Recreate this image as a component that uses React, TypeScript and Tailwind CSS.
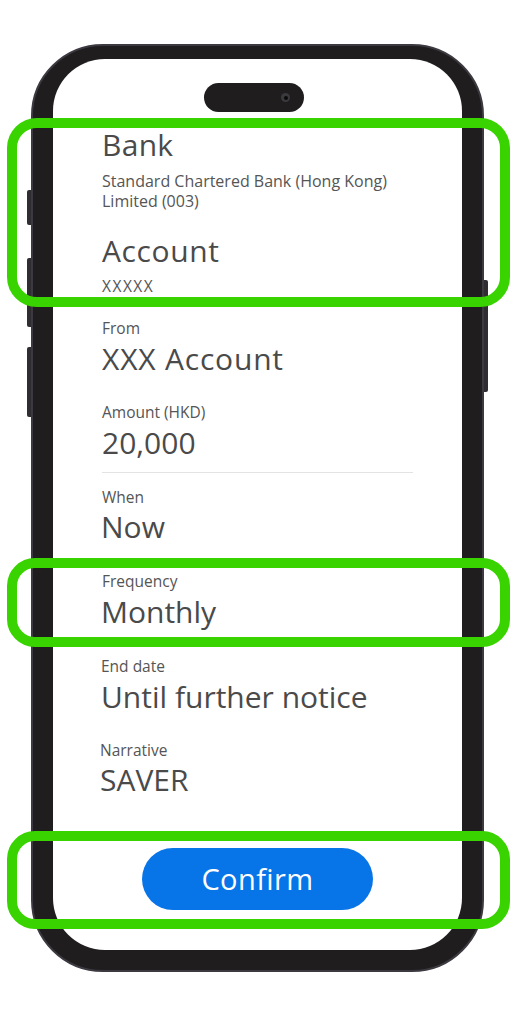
import React from "react";

const font = { fontFamily: "'Open Sans', Lato, sans-serif" };

function Label({ children, className = "" }: { children: React.ReactNode; className?: string }) {
  return <div className={`text-[15.5px] leading-[20px] text-[#555555] ${className}`}>{children}</div>;
}
function Value({ children, className = "" }: { children: React.ReactNode; className?: string }) {
  return <div className={`text-[30px] leading-[36px] text-[#4a4a4a] ${className}`}>{children}</div>;
}

export default function App() {
  return (
    <div className="relative w-[515px] h-[1024px] bg-white overflow-hidden" style={font}>
      <div className="pt-[44px] pl-[31px]">
        <div className="relative w-[453px] h-[928px] rounded-[72px] bg-[#1f1d1e] border-[2px] border-[#3d3940] pt-[13px] px-[20px] pb-[20px]">
          {/* side buttons */}
          <div className="absolute left-[-6px] top-[144px] w-[4px] h-[35px] rounded-l-[2px] bg-[#2f2c32]" />
          <div className="absolute left-[-6px] top-[212px] w-[4px] h-[69px] rounded-l-[2px] bg-[#2f2c32]" />
          <div className="absolute left-[-6px] top-[301px] w-[4px] h-[70px] rounded-l-[2px] bg-[#2f2c32]" />
          <div className="absolute right-[-6px] top-[234px] w-[4px] h-[112px] rounded-r-[2px] bg-[#2f2c32]" />

          <div className="flex flex-col h-full w-full rounded-[52px] bg-white overflow-hidden">
            <div className="flex justify-center pt-[24px]">
              <div className="flex items-center justify-end pr-[14px] w-[100px] h-[29px] rounded-full bg-[#1f1d1e] ml-[-7px]">
                <div className="w-[9px] h-[9px] rounded-full bg-[#3a3a3e] flex items-center justify-center">
                  <div className="w-[4px] h-[4px] rounded-full bg-[#0a0a0a]" />
                </div>
              </div>
            </div>

            <div className="flex flex-col pl-[49px] pt-[15px]">
              <Value className="tracking-[0.3px]">Bank</Value>
              <div className="mt-[8px] text-[16px] leading-[20px] text-[#555555]">
                Standard Chartered Bank (Hong Kong)
                <br />
                Limited (003)
              </div>
              <Value className="mt-[22px] tracking-[0.6px]">Account</Value>
              <Label className="mt-[7px] tracking-[1.5px]">XXXXX</Label>

              <Label className="mt-[22px]">From</Label>
              <Value className="mt-[3px] tracking-[0.8px]">XXX Account</Value>

              <Label className="mt-[25px]">Amount (HKD)</Label>
              <Value className="mt-[3px]">20,000</Value>
              <div className="mt-[11px] h-[1px] w-[311px] bg-[#e3e3e3]" />

              <Label className="mt-[14px]">When</Label>
              <Value className="mt-[2px] ml-[-1px]">Now</Value>

              <Label className="mt-[26px]">Frequency</Label>
              <Value className="mt-[3px] ml-[-1px]">Monthly</Value>

              <Label className="mt-[26px] ml-[-1px]">End date</Label>
              <Value className="mt-[3px] ml-[-1px]">Until further notice</Value>

              <Label className="mt-[25px] ml-[-2px]">Narrative</Label>
              <Value className="mt-[2px] ml-[-2px]">SAVER</Value>
            </div>

            <div className="flex justify-center mt-[50px]">
              <button className="w-[231px] h-[62px] rounded-full bg-[#0774e8] text-white text-[29px] leading-[36px] tracking-[0.4px]">
                Confirm
              </button>
            </div>
          </div>
        </div>
      </div>

      {/* annotation boxes */}
      <div className="absolute left-[7px] top-[118px] w-[503px] h-[189px] rounded-[30px] border-[10px] border-[#39d300]" />
      <div className="absolute left-[7px] top-[558px] w-[503px] h-[89px] rounded-[28px] border-[10px] border-[#39d300]" />
      <div className="absolute left-[7px] top-[831px] w-[503px] h-[98px] rounded-[28px] border-[10px] border-[#39d300]" />
    </div>
  );
}
